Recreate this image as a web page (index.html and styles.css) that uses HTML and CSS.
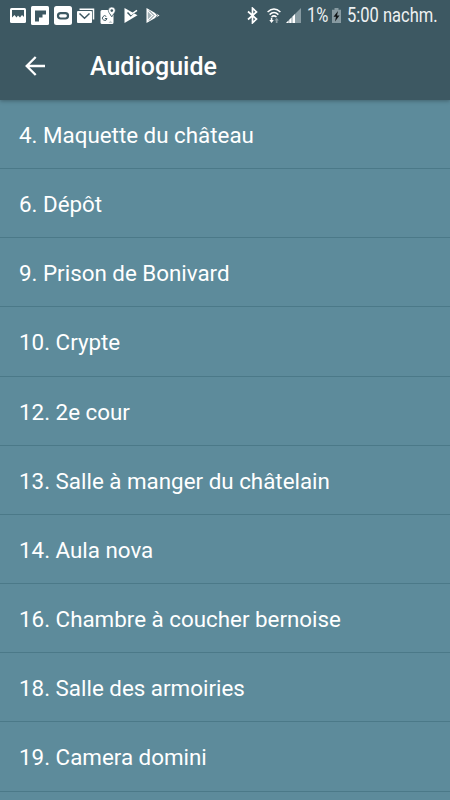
FILE: index.html
```
<!DOCTYPE html>
<html lang="fr">
<head>
  <meta charset="UTF-8">
  <meta name="viewport" content="width=device-width, initial-scale=1.0">
  <title>Audioguide</title>
  <link rel="stylesheet" href="styles.css">
</head>
<body>
  <header class="header">
    <div class="status">
      <div class="status-left">
        <svg class="ico" width="16" height="15" viewBox="0 0 16 15">
          <rect width="16" height="15" rx="1.5" fill="#fff"/>
          <path d="M2 2h12v7l-2-2-2 2.500-2-2-1.500 2L4.500 7 2 9.500z" fill="#3d5862"/>
        </svg>
        <svg class="ico" width="18" height="19" viewBox="0 0 18 19">
          <rect width="18" height="19" rx="1.500" fill="#fff"/>
          <path d="M4 4.500h11v4h-3.500v3H8v4H4z" fill="#3d5862"/>
        </svg>
        <svg class="ico" width="18" height="19" viewBox="0 0 18 19">
          <rect width="18" height="19" rx="2.500" fill="#fff"/>
          <rect x="4" y="7.200" width="10" height="5.300" rx="2.650" fill="none" stroke="#3d5862" stroke-width="2.200"/>
        </svg>
        <svg class="ico" width="18" height="15" viewBox="0 0 18 15">
          <path d="M2.500 1.200H16.500V11.500" fill="none" stroke="#fff" stroke-width="1.500"/>
          <rect x="0" y="3" width="15" height="12" rx="1" fill="#fff"/>
          <path d="M2.500 5.500l5 4.700 5-4.700" fill="none" stroke="#3d5862" stroke-width="1.500"/>
        </svg>
        <svg class="ico" width="16" height="17" viewBox="0 0 16 17">
          <path d="M2 3h6.500c0 3 1.500 4.500 3 7l2-2.500V15.500q0 1.500-1.500 1.500H2q-1.500 0-1.500-1.500V4.500Q.5 3 2 3z" fill="#fff"/>
          <path d="M6.300 9.400a2.300 2.300 0 1 0 .7 2.100H4.900" fill="none" stroke="#3d5862" stroke-width="1"/>
          <path d="M8.500 16l2-2.500 2 2.500z" fill="#3d5862" opacity=".3"/>
          <path d="M11.800 0a3.500 3.500 0 0 1 3.500 3.500c0 2.500-2.500 3.500-3.500 6.500-1-3-3.500-4-3.500-6.500A3.500 3.500 0 0 1 11.800 0z" fill="#fff" stroke="#3d5862" stroke-width=".6"/>
          <circle cx="11.800" cy="3.600" r="1.300" fill="#3d5862"/>
        </svg>
        <svg class="ico" width="14" height="15" viewBox="0 0 14 15">
          <path d="M.5 0L13.500 7.300.5 15z" fill="#fff"/>
          <path d="M3.500 4.500l3.200 3.200L13 1.500" fill="none" stroke="#3d5862" stroke-width="1.500"/>
          <path d="M6.300 5.300l1 1L13 2.300" fill="none" stroke="#fff" stroke-width="1.500"/>
        </svg>
        <svg class="ico" width="14" height="15" viewBox="0 0 14 15">
          <path d="M.5 0L13.500 7.500.5 15z" fill="#fff"/>
          <path d="M3 2.500l5 5-5 5M9.500 4.800l1.800 2.700-1.800 2.700" fill="none" stroke="#3d5862" stroke-width=".8"/>
          <path d="M1.800 3.500L5.800 7.500 1.800 11.500z" fill="#a3b1b6"/>
        </svg>
      </div>
      <div class="status-right">
        <svg class="ico-bt" width="11" height="17" viewBox="0 0 11 17">
          <path d="M1 4.500l8.500 7.500L5.500 15.800V1.200L9.500 5 1 12.500" fill="none" stroke="#fff" stroke-width="1.700"/>
        </svg>
        <svg class="ico-wifi" width="14" height="16" viewBox="0 0 14 16">
          <path d="M.6 4Q7-2 13.400 4M2.600 6.600Q7 2.500 11.400 6.600M4.500 9Q7 6.800 9.500 9" fill="none" stroke="#fff" stroke-width="1.500"/>
          <path d="M2.300 12h1.500V9.800h1.500V12h1.500l-2.250 3z" fill="#fff"/>
          <path d="M7.500 12.500h1.300V15h1.700v-2.500h1.300L9.700 9.700z" fill="#8b9ba1"/>
        </svg>
        <svg class="ico-signal" width="15" height="15" viewBox="0 0 15 15">
          <path d="M0 15L15 0v15z" fill="#879aa1"/>
          <path d="M0 15L2.500 12.500V15zM3.300 15v-3.300L5.500 9.500V15zM6.500 15V8.500L9 6v9z" fill="#fff"/>
        </svg>
        <span class="battery-text">1%</span>
        <svg class="ico-battery" width="9" height="15" viewBox="0 0 9 15">
          <path d="M2.500 0h4v1.800H9V15H0V1.800h2.500z" fill="#879aa1"/>
          <path d="M6 3L1.500 8.700H4L3 13.500l4.500-6H5z" fill="#101517"/>
        </svg>
        <span class="clock">5:00 nachm.</span>
      </div>
    </div>
    <div class="toolbar">
      <svg class="back" width="20" height="20" viewBox="0 0 20 20">
        <path d="M20 10H1.800M10.700 1L1.700 10l9 9" fill="none" stroke="#fff" stroke-width="2.300"/>
      </svg>
      <h1 class="title">Audioguide</h1>
    </div>
  </header>
  <ul class="list">
    <li class="item">4. Maquette du château</li>
    <li class="item">6. Dépôt</li>
    <li class="item">9. Prison de Bonivard</li>
    <li class="item">10. Crypte</li>
    <li class="item">12. 2e cour</li>
    <li class="item">13. Salle à manger du châtelain</li>
    <li class="item">14. Aula nova</li>
    <li class="item">16. Chambre à coucher bernoise</li>
    <li class="item">18. Salle des armoiries</li>
    <li class="item">19. Camera domini</li>
  </ul>
</body>
</html>
```
FILE: styles.css
```
body {
    margin: 0;
    height: 800px;
    overflow: hidden;
    background-color: #5d8b9b;
    color: #fff;
    font-family: Roboto, "Liberation Sans", sans-serif;
}

.header {
    position: relative;
    height: 100px;
    background-color: #3d5862;
    box-shadow: 0 1px 4px rgba(0, 0, 0, .3);
}

.status {
    display: flex;
    justify-content: space-between;
    height: 31px;
    padding: 0 12px 0 10px;
    box-sizing: border-box;
}
.status svg {
    flex: none;
}
.status-left,
.status-right {
    display: flex;
    align-items: center;
}
.status-left {
    gap: 5px;
}
.status-left .ico:nth-child(n+6) {
    margin-left: 3px;
}

.ico-wifi {
    margin-left: 9px;
}
.ico-signal {
    margin-left: 5px;
}
.battery-text,
.clock {
    font-size: 20px;
    line-height: 31px;
    white-space: nowrap;
    color: #eef1f2;
    transform-origin: left center;
    transform: scaleX(.825);
}
.battery-text {
    width: 20px;
    margin-left: 6px;
}
.ico-battery {
    margin-left: 5px;
}
.clock {
    width: 91px;
    margin-left: 6px;
}

.toolbar {
    display: flex;
    align-items: center;
    height: 69px;
    padding-left: 25px;
}
.title {
    margin: 0 0 0 45px;
    padding-top: 2px;
    font-size: 25px;
    font-weight: 500;
    line-height: 30px;
}

.list {
    margin: 0;
    padding: 0;
    list-style: none;
}
.item {
    height: 69.16px;
    padding-left: 19px;
    box-sizing: border-box;
    border-bottom: 1px solid #4b7988;
    font-size: 22.37px;
    line-height: 70px;
    white-space: nowrap;
}
```
